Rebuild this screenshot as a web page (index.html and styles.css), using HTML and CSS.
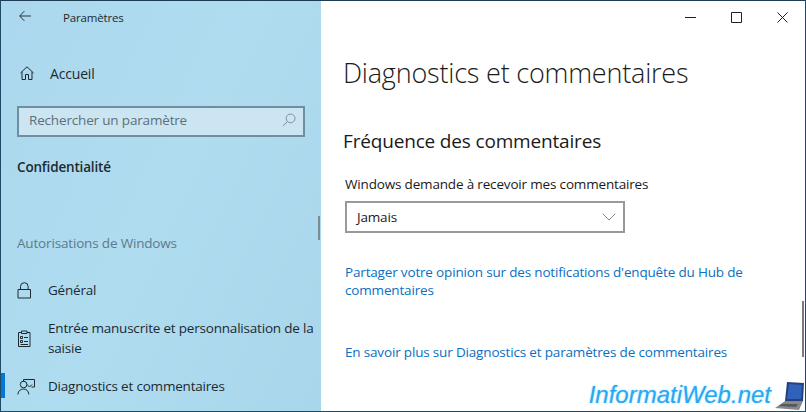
FILE: index.html
```html
<!DOCTYPE html>
<html lang="fr">
<head>
<meta charset="utf-8">
<title>Paramètres</title>
<link rel="stylesheet" href="styles.css">
</head>
<body>
<div class="window">
  <aside class="side">
    <header class="side-head">
      <svg class="back" width="12" height="12" viewBox="0 0 13 12"><path d="M5.800.7.800 6l5 5.300M.8 6H13" fill="none" stroke="#1c2a30" stroke-width="1"/></svg>
      <span class="app-name">Paramètres</span>
    </header>
    <div class="home">
      <svg class="home-icon" width="14" height="14" viewBox="0 0 14 14"><path d="M.5 7 7 .8 13.500 7M2 5.800v7.700h3.500V8.500h3v5h3.500V5.800" fill="none" stroke="#1c2a30" stroke-width="1"/></svg>
      <span>Accueil</span>
    </div>
    <div class="search">
      <span>Rechercher un paramètre</span>
      <svg width="14" height="14" viewBox="0 0 14 14"><circle cx="8.600" cy="5.400" r="4.400" fill="none" stroke="#7b939e"/><path d="M5.400 8.600 1 13" stroke="#7b939e"/></svg>
    </div>
    <h2 class="section">Confidentialité</h2>
    <div class="group">Autorisations de Windows</div>
    <nav class="nav">
      <div class="item item-one">
        <svg width="15" height="17" viewBox="0 0 15 17"><path d="M1 7.500h12.500v8.500H1zM3.500 7.500V4.500a3.800 3.800 0 0 1 7.600 0v3" fill="none" stroke="#1c2a30"/></svg>
        <span>Général</span>
      </div>
      <div class="item item-two">
        <svg width="15" height="17" viewBox="0 0 15 17"><path d="M4.500 2.500H1.500v14h11.500v-14H10M4.500 3.500h5.500V1H4.500zM3.500 6.500h2v2h-2zM3.500 10.500h2v2h-2zM7 7.500h4M7 11.500h4M3.500 14.500h7.500" fill="none" stroke="#1c2a30"/></svg>
        <span>Entrée manuscrite et personnalisation de la saisie</span>
      </div>
      <div class="item item-three">
        <span class="marker"></span>
        <svg width="18" height="17" viewBox="0 0 18 17"><path d="M6.500 3.500V1.500H17.500V9H14.500M10 6.500l2.500 2.500 2.500-2.500M3.300 6.500a3.300 3.300 0 1 1 6.600 0 3.300 3.300 0 1 1-6.600 0M.8 16.500c.4-3.800 3-5.500 5.700-5.500s5 1.700 5.400 5.500" fill="none" stroke="#1c2a30"/></svg>
        <span>Diagnostics et commentaires</span>
      </div>
    </nav>
    <span class="side-scroll"></span>
  </aside>
  <main class="main">
    <div class="controls">
      <svg width="11" height="11" viewBox="0 0 11 11"><path d="M0 5.500h11" stroke="#222"/></svg>
      <svg width="11" height="11" viewBox="0 0 11 11"><path d="M.5.500h10v10H.5z" fill="none" stroke="#222"/></svg>
      <svg width="11" height="11" viewBox="0 0 11 11"><path d="M.5.500l10 10M10.500.500l-10 10" stroke="#222"/></svg>
    </div>
    <h1 class="title">Diagnostics et commentaires</h1>
    <h2 class="subtitle">Fréquence des commentaires</h2>
    <label class="label">Windows demande à recevoir mes commentaires</label>
    <div class="select">
      <span>Jamais</span>
      <svg width="14" height="8" viewBox="0 0 14 8"><path d="M.7.700 7 7l6.300-6.300" fill="none" stroke="#8a8a8a"/></svg>
    </div>
    <a class="link link-one" href="#">Partager votre opinion sur des notifications d'enquête du Hub de commentaires</a>
    <a class="link link-two" href="#">En savoir plus sur Diagnostics et paramètres de commentaires</a>
    <span class="main-scroll"></span>
    <div class="mark">
      <span class="mark-text">InformatiWeb.net</span>
      <svg width="31" height="30" viewBox="0 0 31 30"><path d="M13 1 30 2 29 20 11 20z" fill="#23407f"/><path d="M15 3 28 4 27 18 13 18z" fill="#2f62b8"/><path d="M11 20 29 20 25 29 1 27z" fill="#85898c"/><path d="M8 23 24 23 22 26 5 25z" fill="#55595c"/></svg>
    </div>
  </main>
</div>
</body>
</html>
```
FILE: styles.css
```css
* { box-sizing: border-box; }
html, body { margin: 0; height: 100%; }
body { font-family: "Open Sans", "Noto Sans", sans-serif; color: #1a1a1a; overflow: hidden; letter-spacing: -.17px; }
.window { position: relative; display: flex; width: 806px; height: 412px; border: 1px solid #1d4a66; border-top-color: #1f3d52; overflow: hidden; }

.side { position: relative; width: 320px; flex: none; background: linear-gradient(115deg, #abd8ee 0%, #b0dcf0 50%, #a9d6ea 100%); color: #1c2a30; }
.side-head { display: flex; align-items: center; height: 33px; padding-left: 18px; }
.back { margin-bottom: 3px; }
.app-name { margin-left: 32px; font-size: 11.500px; }
.home { display: flex; align-items: center; gap: 16px; height: 28px; margin-top: 25px; padding-left: 19px; font-size: 14px; }
.search { display: flex; align-items: center; justify-content: space-between; width: 288px; height: 31px; margin: 19px 0 0 16px; padding: 0 7px 4px 10px; border: 2px solid #6e8fa0; background: #cbe5f2; color: #5d7079; font-size: 13.500px; }
.section { margin: 20px 0 0 16px; font-size: 13.500px; font-weight: 600; line-height: 20px; }
.group { margin: 56px 0 0 16px; color: #5c7a88; font-size: 13.500px; line-height: 20px; }
.nav { display: flex; flex-direction: column; margin-top: 27px; font-size: 13.500px; line-height: 20px; letter-spacing: -.2px; }
.item { position: relative; display: flex; align-items: center; gap: 16px; padding-left: 16px; }
.item svg { flex: none; }
.item-one { height: 20px; }
.item-two { height: 40px; margin-top: 18px; }
.item-three { height: 20px; margin-top: 18px; gap: 13px; padding-left: 16px; }
.marker { position: absolute; left: -1px; top: -3px; width: 5px; height: 25px; background: #0078d4; }
.side-scroll { position: absolute; right: 1px; top: 215px; width: 2px; height: 24px; background: #7d8b92; }

.main { position: relative; flex: 1; padding-left: 22px; background: #fff; }
.controls { position: absolute; top: 11px; right: 17px; display: flex; gap: 35px; }
.title { margin: 49px 0 0; font-size: 27px; font-weight: 300; line-height: 46px; letter-spacing: -.2px; }
.subtitle { margin: 31px 0 0; font-size: 19px; font-weight: 400; line-height: 28px; }
.label { display: block; margin: 19px 0 0 2px; font-size: 13.500px; line-height: 20px; }
.select { display: flex; align-items: center; justify-content: space-between; width: 280px; height: 32px; margin: 7px 0 0 2px; padding: 0 7px 0 10px; border: 2px solid #999; font-size: 13.500px; }
.link { display: block; margin-left: 2px; width: 440px; color: #0a6fc2; font-size: 13.500px; line-height: 18px; text-decoration: none; }
.link-one { margin-top: 30px; }
.link-two { margin-top: 44px; }
.main-scroll { position: absolute; right: 1px; top: 300px; width: 2px; height: 56px; background: #7b7b7b; }
.mark { position: absolute; right: 0; bottom: 0; display: flex; align-items: flex-end; gap: 3px; }
.mark-text { margin-bottom: 2px; color: #29a8f2; font-family: "Liberation Sans", sans-serif; font-size: 24px; font-style: italic; line-height: 28px; letter-spacing: 0; text-shadow: 0 0 2px #8fd6ff; }
```
